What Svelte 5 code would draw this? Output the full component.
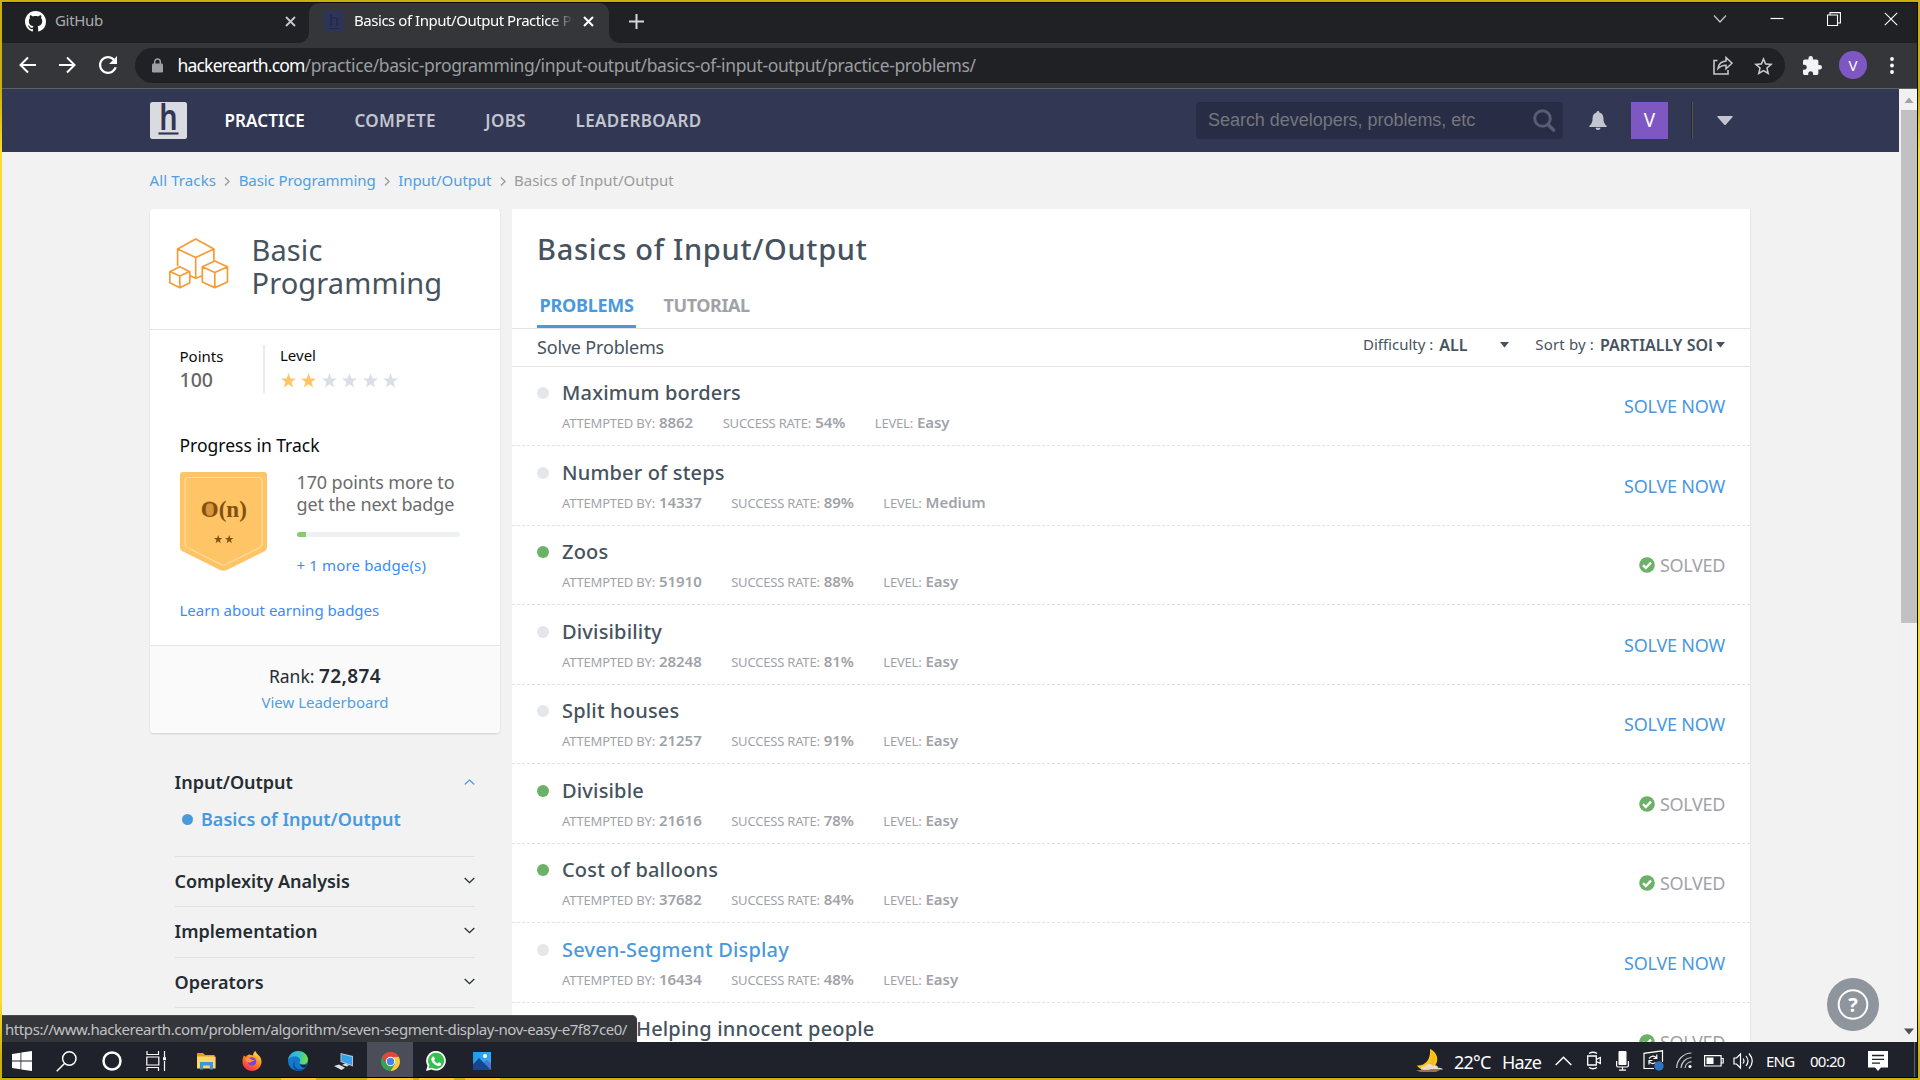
<script>
  const problems = [
    { title: 'Maximum borders', attempted: '8862', rate: '54%', level: 'Easy', solved: false },
    { title: 'Number of steps', attempted: '14337', rate: '89%', level: 'Medium', solved: false },
    { title: 'Zoos', attempted: '51910', rate: '88%', level: 'Easy', solved: true },
    { title: 'Divisibility', attempted: '28248', rate: '81%', level: 'Easy', solved: false },
    { title: 'Split houses', attempted: '21257', rate: '91%', level: 'Easy', solved: false },
    { title: 'Divisible', attempted: '21616', rate: '78%', level: 'Easy', solved: true },
    { title: 'Cost of balloons', attempted: '37682', rate: '84%', level: 'Easy', solved: true },
    { title: 'Seven-Segment Display', attempted: '16434', rate: '48%', level: 'Easy', solved: false, hover: true }
  ];
  const crumbs = ['All Tracks', 'Basic Programming', 'Input/Output'];
  const sections = ['Complexity Analysis', 'Implementation', 'Operators'];
  const starPath = 'M7.5 0l1.9 5.4 5.6.1-4.5 3.5 1.7 5.6-4.7-3.3-4.7 3.3L4.5 9 0 5.500l5.600-.1z';
</script>

{#snippet check()}
  <svg class="check" width="16" height="16" viewBox="0 0 16 16"><circle cx="8" cy="8" r="7.8" fill="#6db067" /><path d="M4 8.200l2.800 2.800 5.200-5.400" fill="none" stroke="#fff" stroke-width="2.400" /></svg>
{/snippet}

<div class="screen">
  <div class="window">
    <div class="tabs-strip">
      <div class="tab first">
        <svg class="fav" width="21" height="21" viewBox="0 0 16 16"><path fill="#fff" d="M8 0C3.580 0 0 3.580 0 8c0 3.540 2.290 6.530 5.470 7.590.4.070.55-.17.55-.38 0-.19-.01-.82-.01-1.490-2.010.37-2.530-.49-2.690-.94-.09-.23-.48-.94-.82-1.130-.28-.15-.68-.52-.01-.53.63-.01 1.080.58 1.230.82.72 1.210 1.870.87 2.330.66.070-.52.28-.87.51-1.070-1.780-.2-3.640-.89-3.640-3.950 0-.87.31-1.590.82-2.150-.08-.2-.36-1.020.08-2.120 0 0 .67-.21 2.200.82.64-.18 1.320-.27 2-.27s1.360.09 2 .27c1.530-1.040 2.200-.82 2.200-.82.44 1.100.16 1.920.08 2.120.51.56.82 1.270.82 2.150 0 3.070-1.870 3.750-3.650 3.950.29.25.54.73.54 1.480 0 1.070-.01 1.930-.01 2.200 0 .21.15.46.55.38A8.010 8.010 0 0 0 16 8c0-4.420-3.580-8-8-8z" /></svg>
        <span class="tab-title">GitHub</span>
        <svg class="x" width="11" height="11" viewBox="0 0 11 11"><path d="M1 1l9 9M10 1l-9 9" stroke="#c6c9cd" stroke-width="1.800" /></svg>
      </div>
      <div class="tab active">
        <svg class="fav" width="20" height="20" viewBox="0 0 20 20"><rect width="20" height="20" rx="2" fill="#2d3458" /><text x="10" y="15" text-anchor="middle" font-size="17" fill="#222849" font-family="Noto Sans">h</text><path d="M5 17.500h10" stroke="#222849" /></svg>
        <span class="tab-title">Basics of Input/Output Practice Pro</span>
        <svg class="x" width="11" height="11" viewBox="0 0 11 11"><path d="M1 1l9 9M10 1l-9 9" stroke="#fff" stroke-width="2" /></svg>
      </div>
      <svg class="plus" width="15" height="15" viewBox="0 0 15 15"><path d="M7.500 0v15M0 7.500h15" stroke="#d5d7da" stroke-width="2" /></svg>
      <div class="controls">
        <svg width="14" height="14" viewBox="0 0 14 14"><path d="M1 3.500l6 6.500 6-6.500" fill="none" stroke="#c8c9cb" stroke-width="1.200" /></svg>
        <svg width="14" height="14" viewBox="0 0 14 14"><path d="M.5 6.500h13" stroke="#fff" stroke-width="1.200" /></svg>
        <svg width="14" height="14" viewBox="0 0 14 14"><path d="M.5 3h10v10.500H.5zM3 3V.6h10.400v10.400H11" fill="none" stroke="#fff" stroke-width="1.100" /></svg>
        <svg width="14" height="14" viewBox="0 0 14 14"><path d="M.8.8l12.400 12.400M13.200.8L.8 13.200" stroke="#fff" stroke-width="1.100" /></svg>
      </div>
    </div>

    <div class="toolbar">
      <svg class="back" width="18" height="18" viewBox="0 0 18 18"><path d="M17 9H2M9 1.500L1.500 9 9 16.500" fill="none" stroke="#fff" stroke-width="2" /></svg>
      <svg class="fwd" width="18" height="18" viewBox="0 0 18 18"><path d="M1 9h15M9 1.500L16.500 9 9 16.500" fill="none" stroke="#fff" stroke-width="2" /></svg>
      <svg class="reload" width="18" height="18" viewBox="4 4 16 16"><path fill="#fff" d="M17.650 6.350C16.200 4.900 14.210 4 12 4c-4.420 0-7.990 3.580-7.990 8s3.570 8 7.990 8c3.730 0 6.840-2.550 7.730-6h-2.080c-.82 2.330-3.040 4-5.650 4-3.310 0-6-2.690-6-6s2.690-6 6-6c1.660 0 3.140.69 4.220 1.780L13 11h7V4l-2.350 2.350z" /></svg>
      <div class="omnibox">
        <svg width="11" height="15" viewBox="0 0 11 15"><rect y="5.500" width="11" height="9" rx="1.200" fill="#9aa0a6" /><path d="M2.700 6V3.800a2.800 2.800 0 0 1 5.600 0V6" fill="none" stroke="#9aa0a6" stroke-width="1.500" /></svg>
        <span class="url"><b>hackerearth.com</b><span>/practice/basic-programming/input-output/basics-of-input-output/practice-problems/</span></span>
        <svg class="share" width="20" height="19" viewBox="0 0 20 19"><path d="M4.500 4.500H1v13.500h14v-4" fill="none" stroke="#c4c7ca" stroke-width="1.600" /><path d="M5 12.500c.6-4.600 3.200-7 8-7.400V1.500l6 5.700-6 5.600V9.200c-3.500 0-6 1-8 3.300z" fill="none" stroke="#c4c7ca" stroke-width="1.500" /></svg>
        <svg class="fav-star" width="19" height="18" viewBox="2 2 20 19"><path fill="#c8cbce" d="M22 9.240l-7.190-.62L12 2 9.190 8.630 2 9.240l5.460 4.730L5.820 21 12 17.270 18.180 21l-1.630-7.030L22 9.240zM12 15.400l-3.760 2.270 1-4.280-3.320-2.880 4.380-.38L12 6.100l1.710 4.040 4.380.38-3.320 2.880 1 4.280L12 15.400z" /></svg>
      </div>
      <svg class="puzzle" width="19" height="19" viewBox="2 1 21 21"><path fill="#f1f3f4" d="M20.500 11H19V7c0-1.100-.9-2-2-2h-4V3.500a2.500 2.500 0 0 0-5 0V5H4c-1.100 0-2 .9-2 2v3.800h1.500c1.500 0 2.700 1.200 2.700 2.700S5 16.200 3.500 16.200H2V20c0 1.100.9 2 2 2h3.800v-1.500c0-1.500 1.200-2.700 2.700-2.700s2.700 1.200 2.700 2.700V22H17c1.100 0 2-.9 2-2v-4h1.500a2.500 2.500 0 0 0 0-5z" /></svg>
      <span class="profile">V</span>
      <svg class="dots" width="4" height="17" viewBox="0 0 4 17"><g fill="#fff"><circle cx="2" cy="2" r="1.900" /><circle cx="2" cy="8.500" r="1.900" /><circle cx="2" cy="15" r="1.900" /></g></svg>
    </div>

    <div class="view">
      <div class="page">
        <header class="site">
          <svg class="logo" width="37" height="37" viewBox="0 0 37 37"><rect width="37" height="37" rx="2.500" fill="#d9dbe1" /><g transform="translate(18.500 0) scale(.8 1)"><text x="0" y="27.500" text-anchor="middle" font-size="36" font-weight="600" font-family="Noto Sans" fill="#323754">h</text></g><path d="M8.500 31.500h20" stroke="#323754" stroke-width="2.200" /></svg>
          <nav>
            <span class="on">PRACTICE</span><span>COMPETE</span><span>JOBS</span><span>LEADERBOARD</span>
          </nav>
          <div class="search">
            <span>Search developers, problems, etc</span>
            <svg width="23" height="23" viewBox="0 0 23 23"><circle cx="9.500" cy="9.500" r="7.800" fill="none" stroke="#585d72" stroke-width="3" /><path d="M15 15.500l5.500 5.500" stroke="#585d72" stroke-width="3.600" stroke-linecap="round" /></svg>
          </div>
          <svg class="bell" width="18" height="19" viewBox="0 0 18 19"><path fill="#c3c5cf" d="M9 0c.9 0 1.400.6 1.400 1.500 2.700.6 4 2.900 4 5.500 0 4 1 6 3.300 8v1H.3v-1c2.300-2 3.300-4 3.300-8 0-2.600 1.300-4.900 4-5.500C7.600.6 8.100 0 9 0zM6.500 16.800h5C11.300 18.200 10.300 19 9 19s-2.300-.8-2.500-2.200z" /></svg>
          <span class="user">V</span>
          <i class="bar"></i>
          <svg class="caret" width="16" height="10" viewBox="0 0 16 10"><path d="M1 0h14q1 0 .6 1L9 8.600q-1 1-2 0L.4 1Q0 0 1 0z" fill="#c3c5cf" /></svg>
        </header>

        <div class="crumbs">
          {#each crumbs as c}
            <a href="#top">{c}</a>
            <svg width="6" height="9" viewBox="0 0 6 9"><path d="M1 .5l4 4-4 4" fill="none" stroke="#9b9b9b" stroke-width="1.400" /></svg>
          {/each}
          <span>Basics of Input/Output</span>
        </div>

        <div class="columns">
          <aside>
            <section class="track">
              <div class="track-head">
                <svg width="60" height="51" viewBox="0 0 60 51" fill="none" stroke="#f79b34" stroke-width="1.700" stroke-linejoin="round"><path d="M8.600 28V11L26.700 1l18.200 10v12M8.600 11l18.100 8.500L44.900 11M26.700 19.500V40M21 37.700l5.700 2.600 6.500-2.600M10.800 28.700l10 5v11l-10 5-10-5v-11zM.8 33.500l10 4.500 10-4.500M10.800 38v11.500M45.800 23l12.700 5.800V44l-12.700 5.600L33.300 44V28.800zM33.300 28.800l12.500 5.700 12.700-5.700M45.800 34.500v15" /></svg>
                <h2>Basic<br />Programming</h2>
              </div>
              <div class="track-body">
                <div class="stats">
                  <div class="points"><span>Points</span><b>100</b></div>
                  <div class="level">
                    <span>Level</span>
                    <div class="stars">
                      {#each [1, 1, 0, 0, 0, 0] as on}
                        <svg width="15" height="15" viewBox="0 0 15 15"><path d={starPath} fill={on ? '#ffc466' : '#dadee7'} /></svg>
                      {/each}
                    </div>
                  </div>
                </div>
                <div class="progress-title">Progress in Track</div>
                <div class="progress">
                  <svg width="87" height="99" viewBox="0 0 87 99">
                    <path d="M3 0h81q3 0 3 3v72q0 3-3 4.500L47 98q-3.500 1.600-7 0L3 79.500Q0 78 0 75V3q0-3 3-3z" fill="#ffc466" />
                    <path d="M8 5.500h71q3 0 3 3v63q0 3-3 4.500L45.500 92.500q-2 1-4 0L8 76q-3-1.500-3-4.500v-63q0-3 3-3z" fill="none" stroke="#ffdb9f" stroke-width="1.200" />
                    <ellipse cx="29.500" cy="36.500" rx="6.500" ry="7.500" fill="#d8943e" />
                    <text x="43.800" y="44.500" text-anchor="middle" font-family="Liberation Serif" font-weight="bold" font-size="23" fill="#83500f">O(n)</text>
                    <g fill="#83500f"><path transform="translate(34 63) scale(.56)" d={starPath} /><path transform="translate(45 63) scale(.56)" d={starPath} /></g>
                  </svg>
                  <div class="progress-info">
                    <p>170 points more to<br />get the next badge</p>
                    <div class="meter"><i></i></div>
                    <a href="#top">+ 1 more badge(s)</a>
                  </div>
                </div>
                <a class="learn" href="#top">Learn about earning badges</a>
              </div>
              <div class="rank">
                <div class="rank-line">Rank: <b>72,874</b></div>
                <a href="#top">View Leaderboard</a>
              </div>
            </section>

            <div class="menu">
              <div class="menu-open">
                <div class="menu-row"><span>Input/Output</span><svg width="11" height="6" viewBox="0 0 11 6"><path d="M.7 5.500L5.500 1l4.800 4.500" fill="none" stroke="#4a9be0" stroke-width="1.200" /></svg></div>
                <div class="menu-sub"><i></i><span>Basics of Input/Output</span></div>
              </div>
              {#each sections as s}
                <div class="menu-item"><span>{s}</span><svg width="11" height="7" viewBox="0 0 11 7"><path d="M.7 1l4.800 4.700L10.300 1" fill="none" stroke="#252c33" stroke-width="1.300" /></svg></div>
              {/each}
            </div>
          </aside>

          <main>
            <h1>Basics of Input/Output</h1>
            <div class="page-tabs"><span class="on">PROBLEMS</span><span>TUTORIAL</span></div>
            <div class="filters">
              <span class="solve">Solve Problems</span>
              <span class="label diff">Difficulty :</span>
              <b class="all">ALL</b>
              <svg width="9" height="6" viewBox="0 0 9 6"><path d="M0 0h9L4.500 5.500z" fill="#46535e" /></svg>
              <span class="label sort">Sort by :</span>
              <b class="partial">PARTIALLY SOLVED</b>
              <svg width="9" height="6" viewBox="0 0 9 6"><path d="M0 0h9L4.500 5.500z" fill="#46535e" /></svg>
            </div>
            {#each problems as p}
              <div class="problem">
                <i class="dot" class:done={p.solved}></i>
                <div class="info">
                  <div class="title" class:hover={p.hover}>{p.title}</div>
                  <div class="meta">
                    <span class="m1">ATTEMPTED BY:</span><b>{p.attempted}</b>
                    <span class="m2">SUCCESS RATE:</span><b>{p.rate}</b>
                    <span class="m3">LEVEL:</span><b>{p.level}</b>
                  </div>
                </div>
                {#if p.solved}
                  <div class="solved">{@render check()}<span>SOLVED</span></div>
                {:else}
                  <a class="now" href="#top">SOLVE NOW</a>
                {/if}
              </div>
            {/each}
            <div class="problem last">
              <div class="info"><div class="title">Helping innocent people</div></div>
              <div class="solved">{@render check()}<span>SOLVED</span></div>
            </div>
          </main>
        </div>
      </div>

      <div class="scrollbar">
        <svg width="12" height="7" viewBox="0 0 12 7"><path d="M1.500 6h9L6 .5z" fill="#a3a3a3" /></svg>
        <i></i>
        <svg class="down" width="12" height="7" viewBox="0 0 12 7"><path d="M1 .5h10L6 6.500z" fill="#505050" /></svg>
      </div>

      <div class="help">
        <svg width="52" height="53" viewBox="0 0 52 53"><circle cx="26" cy="26.500" r="14.300" fill="none" stroke="#fff" stroke-width="2" /><text x="26" y="33.800" text-anchor="middle" font-family="Noto Sans" font-weight="700" font-size="20" fill="#fff">?</text></svg>
      </div>
      <div class="status">https://www.hackerearth.com/problem/algorithm/seven-segment-display-nov-easy-e7f87ce0/</div>
    </div>

    <div class="taskbar">
      <div class="apps">
        <span class="app start"><svg width="20" height="20" viewBox="0 0 20 20"><path fill="#fff" d="M0 3l8.500-1.300v7.900H0zM9.300 1.500L20 0v9.600H9.300zM0 10.400h8.500v7.900L0 17zM9.300 10.400H20V20L9.300 18.500z" /></svg></span>
        <span class="app n"><svg width="21" height="21" viewBox="0 0 21 21" fill="none" stroke="#fff" stroke-width="1.500"><circle cx="13.300" cy="7.500" r="6.700" /><path d="M8.500 12.500L.7 20.300" /></svg></span>
        <span class="app n"><svg width="20" height="20" viewBox="0 0 20 20"><circle cx="10" cy="10" r="8.500" fill="none" stroke="#fff" stroke-width="2.500" /></svg></span>
        <span class="app n"><svg width="21" height="20" viewBox="0 0 21 20" fill="none" stroke="#fff" stroke-width="1.200"><path d="M1 0v3.500h11.500V0M1 20v-3.500h11.500V20M.8 6h12v8H.8zM18.500 0v6M18.500 10v10" /><path d="M17 6.200h3v3h-3z" fill="#fff" stroke="none" /></svg></span>
        <span class="app gap"><svg width="19" height="18" viewBox="0 0 19 18"><path d="M0 2q0-1 1-1h5l2 2h9.500v4H0z" fill="#e0a214" /><path d="M0 4.500h18q.6 0 .6.600V16q0 .6-.6.600H0z" fill="#ffd767" /><path d="M3 17.500V10h13v7.500h-3.200v-4H6.200v4z" fill="#3d95dd" /></svg></span>
        <span class="app"><svg width="20" height="20" viewBox="0 0 20 20"><defs><linearGradient id="ff" x1=".8" y1="0" x2=".25" y2="1"><stop offset="0" stop-color="#ffe84a" /><stop offset=".45" stop-color="#ff8a23" /><stop offset="1" stop-color="#f4264d" /></linearGradient></defs><path d="M1.800 4.500c.7.800 1.500 1.100 2.200 1.200C5 4.500 6 3.800 7.500 3.600L11 4.500C11 2.500 12 1 13.500 0c.5 2 2 3 3.300 4.500C18.500 6 19.500 8.200 19.500 10.800c0 5-4.300 9.200-9.500 9.200S.5 16 .5 10.800c0-2.500.4-4.500 1.300-6.300z" fill="url(#ff)" /><circle cx="10" cy="10.500" r="4.300" fill="#7a45d8" /><path d="M3 8c2-1.500 4-1 6 .3 1 .8 3 .7 4 .2-1 1.700-3 1.500-4 2.500-1.500 1.200-4 .5-4.500-1z" fill="#ff9632" /></svg></span>
        <span class="app run"><svg width="20" height="20" viewBox="0 0 20 20"><defs><linearGradient id="eg" x1="0" y1="0" x2="1" y2=".2"><stop offset="0" stop-color="#2aa9e8" /><stop offset=".6" stop-color="#36c3c0" /><stop offset="1" stop-color="#6be04f" /></linearGradient></defs><circle cx="10" cy="10" r="10" fill="#1279cf" /><path d="M0 9.500C.5 4 4.800 0 10 0c6 0 10 4.300 10 8.500 0 3-2.300 4.800-5 4.800-2.200 0-3.600-.8-3.600-1.500 0-.6.9-.9.900-2.300C12.300 7 9.500 5.300 6.500 5.300 3 5.300.7 7.500 0 9.500z" fill="url(#eg)" /><path d="M7.600 9.500c-2 2-1.500 6.500 2.400 8.200 2.800 1.200 6 .2 8-1.800-1.800 3-4.700 4.100-8 4.100-5.500-1-7-7.500-2.400-10.500z" fill="#0d4f9e" /><path d="M12 13c2 1.300 4.700 1 7 .2-.3 1.200-1 2.200-1.800 3-2.700 1-4.700-.7-5.200-3.200z" fill="#1f222b" /></svg></span>
        <span class="app"><svg width="20" height="19" viewBox="0 0 20 19"><path d="M6.500 1l12.500 3v10.500L6.500 10z" fill="#b7c3cc" /><path d="M7.500 2.200L18 4.900v8.200L7.500 9.300z" fill="#35a3ea" /><path d="M8 13l3-1.500 4 1.500-2 1.500zM0 14l5-1.500 6 3.200L7.500 18z" fill="#dbe0e4" /></svg></span>
        <span class="app cur run"><svg width="19" height="19" viewBox="0 0 20 20"><path d="M10 10L1.340 5A10 10 0 0 1 18.660 5z" fill="#e0483c" /><path d="M1.340 5A10 10 0 0 0 10 20l4.300-7.500L5.700 12.500z" fill="#35a352" /><path d="M18.660 5A10 10 0 0 1 10 20l4.500-7.500L13 5z" fill="#fcca3f" /><path d="M10 5h8.660A10 10 0 0 0 1.340 5l4.300 7.500z" fill="#e0483c" /><circle cx="10" cy="10" r="4.900" fill="#fff" /><circle cx="10" cy="10" r="3.900" fill="#4384ee" /></svg></span>
        <span class="app run"><svg width="20" height="20" viewBox="0 0 20 20"><path d="M10.200 0a9.800 9.800 0 1 1-4.700 18.500L0 20l1.500-5.300A9.800 9.800 0 0 1 10.200 0z" fill="#fff" /><path d="M10.200 1.700a8.100 8.100 0 1 1-4.400 15L2.500 17.500l.9-3.200A8.100 8.100 0 0 1 10.200 1.700z" fill="#35bf4d" /><path d="M7.400 5.500c.5 0 .6.100.8.600l.7 1.700c.1.400-.5 1-.8 1.400.8 1.600 2 2.600 3.600 3.200.4-.3.900-1.200 1.300-1.100l1.900.9c.4.200.3 1.100 0 1.700-.5.800-1.600 1.200-2.500 1.100-3.500-.6-6-3-7-5.800-.4-1.700.6-3.700 2-3.700z" fill="#fff" /></svg></span>
        <span class="app run"><svg width="18" height="18" viewBox="0 0 18 18"><defs><linearGradient id="ph" x1="0" y1="0" x2="1" y2="0"><stop offset="0" stop-color="#1f9ce9" /><stop offset="1" stop-color="#35a9f2" /></linearGradient></defs><path d="M0 0h18v18H0z" fill="url(#ph)" /><path d="M9 12l5-4 4 3.500V18H9z" fill="#4b78cf" /><path d="M0 12.500L6 6l12 12H0z" fill="#15468e" /><circle cx="12" cy="4" r="2" fill="#fff" /></svg></span>
      </div>
      <div class="tray">
        <svg width="30" height="26" viewBox="0 0 30 26"><path d="M15 1c9 4 10 15 1 20-6 3-12 0-14-3.500C10 18 16 12 15 1z" fill="#fcc916" /><path d="M16 3c6 5 6 13-1 17-3 1-6 1-8-.5C15 18 18 11 16 3z" fill="#f6ad13" opacity=".5" /><path d="M6 21c0-2 2-3 4-2.500 1-3 6-3.500 8-.5 2-1.500 5-.5 5 2 2-.5 4 .5 5 1.500H6z" fill="#ecdccb" /><path d="M1 22h24l-4 2H5z" fill="#98714c" /></svg>
        <span class="w t1">22°C</span>
        <span class="w t2">Haze</span>
        <svg width="17" height="10" viewBox="0 0 17 10"><path d="M.7 9L8.500 1.200 16.300 9" fill="none" stroke="#fff" stroke-width="1.500" /></svg>
        <svg width="17" height="19" viewBox="0 0 17 19" fill="none" stroke="#fff" stroke-width="1.300"><path d="M3 2.500q4-2.500 8 0M3 16.500q4 2.500 8 0M1.700 5h8.600v9H1.700zM10.300 8.500l4-2v6l-4-2" /></svg>
        <svg width="13" height="20" viewBox="0 0 13 20"><rect x="2.500" width="8" height="14" rx="1" fill="#fff" /><path d="M.6 10v4.500q0 1.500 1.500 1.500h8.800q1.500 0 1.500-1.500V10M6.500 16v3M3 19.200h7" fill="none" stroke="#fff" stroke-width="1.200" /></svg>
        <svg width="21" height="21" viewBox="0 0 21 21" fill="none" stroke="#fff" stroke-width="1.200"><path d="M11 18.500H1V3.300L19.500.8V12M6 8.500q4-4.500 7.500-.5M13.800 4.500v4h-3.500M6 14.500v-4h3.500M6.500 11.500q2 3.500 6 1" /><circle cx="16" cy="16" r="4.700" fill="#2f74bf" stroke="none" /></svg>
        <svg width="16" height="17" viewBox="0 0 16 17" fill="none" stroke="#fff" stroke-width="1.200"><path d="M.7 16A15 15 0 0 1 15.500 1M5 16A11 11 0 0 1 15.500 5.500M9 16a7 7 0 0 1 6.500-6.300" stroke="#c9cacd" /><circle cx="14" cy="14.500" r="1.600" fill="#fff" stroke="none" /></svg>
        <svg width="20" height="12" viewBox="0 0 20 12"><path d="M.6.600h16.500v10.400H.6zM17.500 3.500h1.700v4.500h-1.700" fill="none" stroke="#fff" stroke-width="1.200" /><path d="M2.500 2.500h7v6.500h-7z" fill="#fff" /></svg>
        <svg width="21" height="18" viewBox="0 0 21 18" fill="none" stroke="#fff" stroke-width="1.200"><path d="M1 6h2.500L7.500 2v14l-4-4H1zM10 6.500q2 2.500 0 5M13 4q4 5 0 10M16 1.500q6.500 7.500 0 15" /></svg>
        <span class="w t3">ENG</span>
        <span class="w t4">00:20</span>
        <svg width="20" height="20" viewBox="0 0 20 20"><path d="M0 0h20v16.500h-7L10 20l-3-3.500H0z" fill="#fff" /><path d="M4 4.500h12M4 8.300h12M4 12.200h8" stroke="#20232c" stroke-width="1.300" /></svg>
        <i class="peek"></i>
      </div>
    </div>
  </div>
</div>

<style>
  :global(body) { background: #1f222b; overflow: hidden; }
  * { box-sizing: border-box; }
  a { text-decoration: none; }
  svg { display: block; flex: none; }
  h1, h2, p { margin: 0; }

  .screen {
    width: 1920px; height: 1080px; padding: 2px;
    background: linear-gradient(#cbaf0c 0 88px, #f8dc30 152px 1000px, #cbaf0c 1060px);
    font-family: "Noto Sans", "Open Sans", sans-serif;
  }
  .window {
    width: 1916px; height: 1076px; background: #202124;
    border-top: 1px solid #0b0b0b; border-right: 1px solid #0b0b0b; border-bottom: 1px solid #000;
    display: flex; flex-direction: column;
  }

  /* browser chrome */
  .tabs-strip { height: 40px; flex: none; display: flex; align-items: center; background: #202124; }
  .tab { height: 40px; display: flex; align-items: center; font-size: 15px; color: #a9acb0; padding-bottom: 4px; }
  .tab-title { margin-top: -2px; }
  .tab .x { margin-left: auto; margin-top: 1px; }
  .first { width: 307px; padding-left: 22.5px; padding-right: 13px; }
  .first .fav { margin-right: 9.5px; }
  .first .tab-title { letter-spacing: -.3px; }
  .active {
    width: 300px; background: #35363a; color: #fff; border-radius: 10px 10px 0 0;
    padding-left: 15px; padding-right: 15px; position: relative;
  }
  .active::before, .active::after { content: ''; position: absolute; bottom: 0; width: 10px; height: 10px; }
  .active::before { left: -10px; background: radial-gradient(circle at 0 0, transparent 9.5px, #35363a 10px); }
  .active::after { right: -10px; background: radial-gradient(circle at 100% 0, transparent 9.5px, #35363a 10px); }
  .active .fav { margin-right: 10px; }
  .active .tab-title {
    width: 219px; overflow: hidden; white-space: nowrap; letter-spacing: -.46px;
    mask-image: linear-gradient(90deg, #000 196px, transparent 219px);
  }
  .plus { margin: 0 0 4px 19.5px; }
  .controls { margin: 0 19px 9px auto; display: flex; gap: 43px; }

  .toolbar {
    height: 46px; flex: none; display: flex; align-items: center; background: #35363a;
    border-bottom: 1px solid #5f6063; padding: 0 0 1px 17px;
  }
  .fwd { margin-left: 21px; }
  .reload { margin-left: 23px; }
  .omnibox {
    width: 1650px; height: 35px; margin: 1px 0 0 18px; border-radius: 18px; background: #202124;
    display: flex; align-items: center; padding: 0 12px 0 17px;
  }
  .url { margin: -2px 0 0 14.5px; font-size: 17.5px; white-space: nowrap; display: flex; }
  .url b { font-weight: 400; color: #fff; letter-spacing: -.81px; }
  .url span { color: #9a9da1; letter-spacing: -.375px; }
  .share { margin-left: auto; }
  .fav-star { margin-left: 21px; }
  .puzzle { margin-left: 18px; }
  .profile {
    width: 28px; height: 28px; margin-left: 17px; border-radius: 50%; background: #7e57c2; color: #fff;
    font-size: 15px; line-height: 28px; text-align: center;
  }
  .dots { margin-left: 23px; }

  .view { flex: 1; min-height: 0; display: flex; position: relative; overflow: hidden; }
  .page { flex: 1; background: #f2f2f2; overflow: hidden; }

  /* site header */
  .site { height: 63px; background: #323754; display: flex; align-items: center; padding: 0 166px 0 148px; }
  nav { display: flex; gap: 49.600px; margin-left: 37.500px; font-size: 17px; font-weight: 600; color: #c3c5cf; letter-spacing: .35px; }
  nav .on { color: #fff; letter-spacing: .1px; }
  .search {
    width: 367px; height: 37px; margin-left: auto; border-radius: 4px; background: #282c44;
    display: flex; align-items: center; justify-content: space-between; padding: 0 7px 0 12px;
    font: 18px "Liberation Sans", sans-serif; color: #75777f;
  }
  .search span { letter-spacing: -.03px; }
  .bell { margin-left: 26px; }
  .user { width: 37px; height: 37px; margin-left: 24px; background: #7e57c2; color: #fff; font-size: 19px; line-height: 37px; text-align: center; }
  .bar { width: 2px; height: 37px; margin-left: 23px; background: #22263b; border-right: 1px solid #55583f; }
  .caret { margin-left: 24px; }

  .crumbs { display: flex; align-items: center; height: 24px; margin: 16px 0 17px 147.5px; font-size: 15px; color: #9b9b9b; }
  .crumbs a { color: #4f9ee3; letter-spacing: -.08px; }
  .crumbs a:first-child { letter-spacing: .1px; }
  .crumbs svg { margin: 2px 8.300px 0; }

  .columns { display: flex; gap: 12px; margin-left: 148px; }
  aside { width: 350px; }
  .track { height: 524px; background: #fff; border-radius: 4px; box-shadow: 0 1px 2px rgba(0, 0, 0, .14); display: flex; flex-direction: column; }
  .track-head { height: 121px; border-bottom: 1px solid #e3e4e6; display: flex; padding: 24px 0 0 18.500px; }
  .track-head svg { margin-top: 5px; }
  .track-head h2 { margin-left: 23px; font-size: 29px; line-height: 33px; font-weight: 400; letter-spacing: .12px; color: #46535e; }
  .track-body { height: 316px; padding: 15px 30px 0 29.500px; border-bottom: 1px solid #e3e4e6; display: flex; flex-direction: column; font-size: 15px; line-height: 24px; }
  .stats { display: flex; height: 48px; color: #0a0a0a; }
  .points { width: 85px; border-right: 2px solid #e9eaec; }
  .stats span, .stats b { display: block; line-height: 22px; }
  .stats b { font-size: 19.5px; line-height: 25px; font-weight: 500; color: #666; }
  .level { margin-left: 15.500px; }
  .level span { line-height: 21px; }
  .stars { display: flex; gap: 5.400px; margin: 7px 0 0 1px; }
  .progress-title { margin-top: 40px; font-size: 17.5px; color: #0a0a0a; }
  .progress { display: flex; margin-top: 15px; height: 105px; }
  .progress-info { width: 163px; margin: -1px 0 0 30px; }
  .progress-info p { font-size: 18px; line-height: 22px; color: #6b6b6b; letter-spacing: -.12px; white-space: nowrap; }
  .meter { height: 5px; margin: 17px 0 16px; border-radius: 3px; background: #eff0f4; overflow: hidden; }
  .meter i { display: block; width: 9px; height: 5px; background: #86cc6d; }
  .progress-info a, .learn { color: #3d8bf8; }
  .progress-info a { letter-spacing: .15px; }
  .learn { margin-top: 21px; }
  .rank { flex: 1; background: #fafafa; border-radius: 0 0 4px 4px; text-align: center; padding-top: 17px; color: #252c33; font-size: 15px; line-height: 24px; }
  .rank-line { font-size: 17.500px; line-height: 26px; margin-bottom: 1px; }
  .rank-line b { font-size: 19px; font-weight: 600; letter-spacing: .4px; }
  .rank a { display: block; color: #4f9ee3; }

  .menu { width: 300px; margin: 34px 0 0 24.500px; font-size: 18px; font-weight: 600; line-height: 30px; color: #252c33; }
  .menu-open { height: 90px; border-bottom: 1px solid #e0e1e3; }
  .menu-row, .menu-item { display: flex; align-items: center; justify-content: space-between; }
  .menu-item { height: 50.300px; border-bottom: 1px solid #e0e1e3; }
  .menu-item span { margin-top: -1px; }
  .menu-item svg { margin-bottom: 2px; }
  .menu-sub { display: flex; align-items: center; margin: 7px 0 0 7px; color: #4a99dd; }
  .menu-sub i { width: 11px; height: 11px; margin-right: 8.500px; border-radius: 50%; background: #4a99dd; }

  /* problem list */
  main { width: 1239px; height: 850px; background: #fff; border-right: 1px solid #e6e7e8; }
  h1 { padding: 20px 0 0 25px; font-size: 29px; line-height: 40px; font-weight: 500; letter-spacing: .7px; color: #46535e; }
  .page-tabs { display: flex; margin-top: 21px; padding-left: 25px; font-size: 18px; line-height: 30px; font-weight: 700; color: #9fa3a8; }
  .page-tabs span { height: 38px; letter-spacing: -.42px; }
  .page-tabs .on { width: 99px; margin-right: 27.500px; padding-left: 2.500px; color: #4a99dd; border-bottom: 3px solid #4a99dd; letter-spacing: -.25px; }
  .filters {
    height: 38.500px; border-top: 1px solid #e2e3e5; border-bottom: 1px solid #e2e3e5;
    display: flex; align-items: center; padding: 0 25px 4px 25px; font-size: 15px; color: #46535e;
  }
  .solve { font-size: 18px; letter-spacing: -.18px; margin: 3px auto 0 0; }
  .label { font-size: 15px; margin-top: -2px; }
  .sort { margin-left: 26px; letter-spacing: .15px; }
  .filters b { font-size: 16px; font-weight: 600; margin: 0 0 0 6px; white-space: nowrap; overflow: hidden; }
  .all { width: 55px; }
  .filters .all + svg { margin-left: 6px; }
  .partial { width: 112px; }
  .partial + svg { margin-left: 4px; }
  .problem { height: 79.500px; border-bottom: 1px dashed #e1e2e4; display: flex; padding: 0 25px 0 25px; }
  .dot { width: 12px; height: 12px; margin-top: 20.500px; border-radius: 50%; background: #e4e6e9; flex: none; }
  .dot.done { background: #6db067; }
  .info { margin-left: 13px; padding-top: 11.500px; flex: 1; }
  .title { font-size: 20px; line-height: 30px; font-weight: 500; letter-spacing: .17px; color: #46535e; }
  .title.hover { color: #4a99dd; }
  .meta { display: flex; align-items: baseline; margin-top: 2px; font-size: 13px; line-height: 24px; color: #9fa3a8; }
  .meta b { font-size: 15px; font-weight: 600; letter-spacing: -.05px; }
  .meta span { letter-spacing: -.2px; margin-right: 4px; }
  .m2, .m3 { margin-left: 29.500px; }
  .now, .solved { display: flex; align-items: center; height: 30px; margin-top: 24.500px; font-size: 18px; letter-spacing: -.2px; color: #4a99dd; }
  .solved { color: #9fa3a8; letter-spacing: -.33px; }
  .check { margin-right: 5px; }
  .last .info { margin-left: 99px; }

  .scrollbar { width: 18px; flex: none; background: #f1f1f1; display: flex; flex-direction: column; align-items: center; padding: 8px 0 7px 2px; }
  .scrollbar i { width: 16px; height: 513px; margin-top: 6px; background: #c1c1c1; }
  .scrollbar .down { margin-top: auto; }

  .help { position: absolute; left: 1825px; top: 889px; width: 52px; height: 53px; border-radius: 50%; background: #8f959d; }
  .status {
    position: absolute; left: 0; bottom: 0; width: 635px; height: 27px; padding-left: 3px;
    background: #35363a; border-top: 1px solid #4b4c50; border-radius: 0 5px 0 0;
    font-size: 15px; line-height: 27px; letter-spacing: -.425px; color: #bfc2c6; white-space: nowrap;
  }

  /* taskbar */
  .taskbar { height: 35px; flex: none; background: #1f222b; display: flex; }
  .apps { display: flex; width: 1413px; }
  .app { width: 46px; height: 35px; display: flex; align-items: center; justify-content: center; padding-top: 3px; position: relative; }
  .start { width: 39px; margin-right: 3px; }
  .n { width: 45px; }
  .gap { margin-left: 4px; }
  .cur { background: #4b4e58; }
  .run::after { content: ''; position: absolute; left: 6px; right: 5px; bottom: -3px; height: 2px; background: #ffc629; }
  .cur::after { left: 0; right: 0; }
  .tray {
    display: grid; align-items: center; padding-top: 2px;
    grid-template-columns: 39px 49px 52px 31px 30px 27px 33px 28px 29px 33px 44px 58px 46px 1px;
  }
  .w { color: #fff; white-space: nowrap; }
  .t1, .t2 { font-size: 18px; letter-spacing: -.75px; margin-top: 2px; }
  .t2 { margin-left: -1px; }
  .t3, .t4 { font-size: 15px; letter-spacing: -.75px; }
  .peek { width: 1px; height: 35px; margin-top: -2px; background: #5d5f66; }
</style>
